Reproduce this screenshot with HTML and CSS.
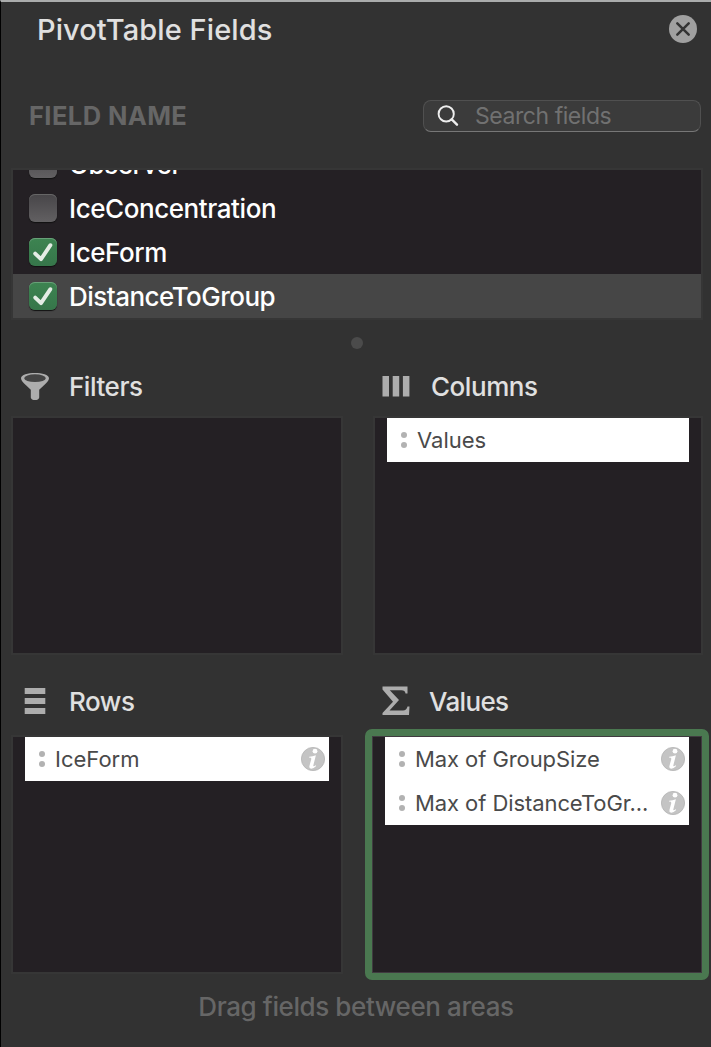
FILE: index.html
```html
<!DOCTYPE html>
<html lang="en">
<head>
<meta charset="utf-8">
<title>PivotTable Fields</title>
<link rel="stylesheet" href="styles.css">
</head>
<body>
<svg class="defs" aria-hidden="true">
  <symbol id="check" viewBox="0 0 28 28"><path d="M6.2 15.6 12 21.2 21.4 7.2" fill="none" stroke="#e4ece5" stroke-width="3.9" stroke-linecap="round" stroke-linejoin="round"/></symbol>
  <symbol id="grip" viewBox="0 0 6 16"><circle cx="3" cy="3" r="3" fill="#b2b2b2"/><circle cx="3" cy="13" r="3" fill="#b2b2b2"/></symbol>
  <symbol id="info" viewBox="0 0 24 24"><circle cx="12" cy="12" r="11.6" fill="#c4c4c4" stroke="#b4b4b4" stroke-width=".8"/><circle cx="14" cy="4.2" r="2.4" fill="#fff"/><path d="M8.2 9.7Q11.5 9.3 14.9 8.2L12.3 18.5Q12 20 14.8 18.3L15.2 19Q12.3 22 9.6 21.6 7.9 21 8.5 18.7L10.3 11.9Q10.6 10.6 8 10.6Z" fill="#fff"/></symbol>
</svg>
<main class="panel">
  <header class="header">
    <h1 class="title">PivotTable Fields</h1>
    <svg class="close" viewBox="0 0 28 28"><circle cx="14" cy="14" r="14" fill="#a0a0a0"/><path d="M8.3 8.3 19.7 19.7M19.7 8.3 8.3 19.7" stroke="#333" stroke-width="2.5" stroke-linecap="round"/></svg>
  </header>
  <div class="toolbar">
    <span class="field-name">FIELD NAME</span>
    <div class="search">
      <svg class="search-icon" viewBox="0 0 22 22"><circle cx="9.2" cy="8.9" r="7.6" fill="none" stroke="#eee" stroke-width="1.9"/><path d="M14.7 14.4 20 19.7" stroke="#eee" stroke-width="2.4" stroke-linecap="round"/></svg>
      <span class="search-text">Search fields</span>
    </div>
  </div>
  <div class="list">
    <div class="row"><span class="box"></span><span class="name">Observer</span></div>
    <div class="row"><span class="box"></span><span class="name">IceConcentration</span></div>
    <div class="row"><span class="box on"><svg width="28" height="28"><use href="#check"/></svg></span><span class="name">IceForm</span></div>
    <div class="row selected"><span class="box on"><svg width="28" height="28"><use href="#check"/></svg></span><span class="name dist">DistanceToGroup</span></div>
  </div>
  <div class="splitter"><span class="dot"></span></div>
  <div class="areas">
    <div class="heading">
      <svg class="area-icon" viewBox="0 0 30 30"><path d="M1 7.2C1 .3 29 .3 29 7.2 29 9.7 26.5 12 24 14.2L19.2 18.8V26.4C19.2 29.8 10.8 29.8 10.8 26.4V18.8L6 14.2C3.5 12 1 9.7 1 7.2Z" fill="#adadad"/><ellipse cx="15" cy="7.2" rx="10.8" ry="3.9" fill="#444"/></svg>
      <h2 class="label">Filters</h2>
    </div>
    <div class="heading right">
      <svg class="area-icon" viewBox="0 0 30 30"><path d="M1.500 5h6.500v20.500h-6.500zM11.700 5h6.500v20.500h-6.500zM21.900 5h6.500v20.500h-6.500z" fill="#adadad"/></svg>
      <h2 class="label columns">Columns</h2>
    </div>
    <div class="zone"></div>
    <div class="zone">
      <div class="chip"><svg class="grip"><use href="#grip"/></svg><span class="chip-text">Values</span></div>
    </div>
    <div class="heading low">
      <svg class="area-icon" viewBox="0 0 30 30"><path d="M4.700 2h20.600v6h-20.600zM4.700 12h20.600v6h-20.600zM4.700 22h20.600v6h-20.600z" fill="#adadad"/></svg>
      <h2 class="label">Rows</h2>
    </div>
    <div class="heading right low">
      <svg class="area-icon" viewBox="0 0 30 30"><path d="M1.500.5H26.500V7.500H24.500Q24 4.200 20.500 4.200H8.800L18 14 8.500 24.500H22Q25.500 24.500 26.500 20.500H28.500L28 29H1.500V27L12 15.700 1.500 3.500Z" fill="#adadad"/></svg>
      <h2 class="label values">Values</h2>
    </div>
    <div class="zone">
      <div class="chip"><svg class="grip"><use href="#grip"/></svg><span class="chip-text">IceForm</span><svg class="info"><use href="#info"/></svg></div>
    </div>
    <div class="zone active">
      <div class="chip"><svg class="grip"><use href="#grip"/></svg><span class="chip-text long">Max of GroupSize</span><svg class="info"><use href="#info"/></svg></div>
      <div class="chip"><svg class="grip"><use href="#grip"/></svg><span class="chip-text long">Max of DistanceToGr...</span><svg class="info"><use href="#info"/></svg></div>
    </div>
  </div>
  <footer class="hint">Drag fields between areas</footer>
</main>
</body>
</html>
```
FILE: styles.css
```css
* { box-sizing: border-box; }
body { margin: 0; background: #323232; font-family: Inter, "Liberation Sans", sans-serif; }
.defs { display: none; }
svg { display: block; flex: none; }
h1, h2 { margin: 0; }
.panel { width: 711px; height: 1047px; overflow: hidden; border-left: 1px solid #000; border-top: 2px solid #aaacac; background: #323232; white-space: nowrap; }
.header { display: flex; align-items: center; justify-content: space-between; height: 54px; padding: 0 14px 0 36px; }
.title { padding-top: 2px; font-size: 29px; font-weight: 500; line-height: 36px; color: #e0e0e0; letter-spacing: 0.08px; }
.close { width: 28px; height: 28px; }
.toolbar { display: flex; align-items: flex-start; justify-content: space-between; height: 114px; padding: 44px 10px 0 28px; }
.field-name { font-size: 25.500px; font-weight: 700; line-height: 32px; letter-spacing: 0.4px; color: #666; }
.search { display: flex; align-items: center; width: 278px; height: 32px; padding-left: 13px; border: 1px solid #505050; border-bottom: 1px solid #777; border-radius: 8px; background: #3b3b3b; }
.search-icon { width: 22px; height: 22px; }
.search-text { margin-left: 16px; font-size: 23px; line-height: 30px; letter-spacing: -0.45px; color: #717171; }
.list { display: flex; flex-direction: column; justify-content: flex-end; width: 688px; height: 148px; margin-left: 12px; overflow: hidden; background: #242024; box-shadow: 0 0 0 2px #363636; }
.row { display: flex; flex: none; align-items: center; height: 44px; padding-left: 16px; }
.row.selected { background: #464646; }
.box { width: 28px; height: 28px; border-radius: 6px; background: linear-gradient(#474548, #626062); box-shadow: 0 1px 1px #111, inset 0 1px #666; }
.box.on { background: linear-gradient(#3d8451, #36764a); box-shadow: 0 1px 1px #111, inset 0 1px #68a078; }
.name { margin-left: 12px; padding-top: 2px; font-size: 26px; font-weight: 500; line-height: 32px; letter-spacing: -0.43px; color: #fff; }
.name.dist { letter-spacing: -0.53px; }
.splitter { display: flex; justify-content: center; height: 36px; padding: 19px 0 0 2px; }
.dot { width: 12px; height: 12px; border-radius: 50%; background: #4b4b4b; }
.areas { display: grid; grid-template-columns: 328px 326px; grid-template-rows: 64px 235px 84px 235px; column-gap: 34px; margin-left: 12px; }
.heading { display: flex; align-items: center; height: 64px; padding-left: 7px; }
.heading.right { padding-left: 6px; }
.heading.low { height: 84px; padding-top: 12px; }
.area-icon { width: 30px; height: 30px; }
.label { margin-left: 19px; padding-top: 2px; font-size: 26px; font-weight: 500; line-height: 32px; letter-spacing: -0.45px; color: #e0e0e0; }
.label.columns { margin-left: 20px; }
.label.values { letter-spacing: -0.65px; margin-left: 18px; }
.zone { padding: 0 12px; background: #242024; box-shadow: 0 0 0 2px #363636; }
.zone.active { height: 251px; margin: -8px -8px 0 -10px; padding: 1px 13px; border: 7px solid #4a7850; border-radius: 7px; box-shadow: inset 0 0 0 1px #403b40; }
.chip { display: flex; align-items: center; height: 44px; padding: 0 4px 0 14px; background: #fff; }
.grip { width: 6px; height: 16px; }
.chip-text { flex: 1; margin-left: 10px; padding-bottom: 1px; font-size: 22px; line-height: 28px; color: #4a4a4a; }
.chip-text.long { letter-spacing: -0.08px; }
.info { width: 24px; height: 24px; }
.hint { margin-top: 19px; padding-right: 0; font-size: 26px; font-weight: 500; line-height: 32px; letter-spacing: -0.4px; text-align: center; color: #666; }
```
